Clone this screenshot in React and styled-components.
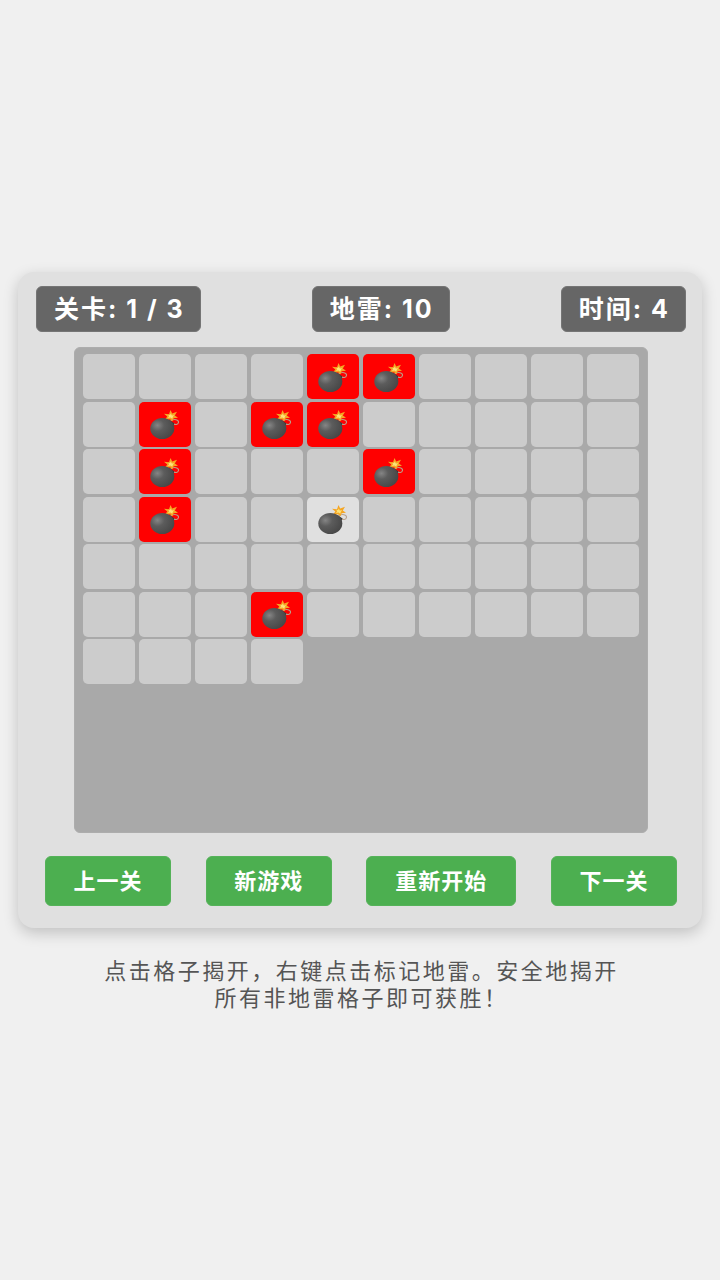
import React from 'react'
import styled, { createGlobalStyle } from 'styled-components'

const GlobalStyle = createGlobalStyle`
  html, body { margin: 0; padding: 0; height: 100%; }
  body {
    background: #f0f0f0;
    font-family: Inter, "Noto Sans CJK SC", "Noto Sans", sans-serif;
  }
`

const Page = styled.div`
  width: 720px;
  height: 1280px;
  padding-top: 272px;
  box-sizing: border-box;
  display: flex;
  flex-direction: column;
  align-items: center;
`

const Panel = styled.div`
  width: 684px;
  height: 656px;
  box-sizing: border-box;
  padding: 14px 16px 0 18px;
  background: #e0e0e0;
  border-radius: 16px;
  box-shadow: 0 5px 15px rgba(0, 0, 0, 0.2);
  display: flex;
  flex-direction: column;
  align-items: center;
`

const StatusBar = styled.div`
  width: 100%;
  display: flex;
  justify-content: space-between;
`

const Stat = styled.div`
  height: 46px;
  padding: 0 15px 4px 17px;
  box-sizing: border-box;
  display: flex;
  align-items: center;
  background: #666666;
  border: 1px solid #757575;
  color: #ffffff;
  border-radius: 6px;
  font-size: 25px;
  font-weight: 700;
  letter-spacing: 2px;
  white-space: nowrap;
`

const Board = styled.div`
  width: 574px;
  height: 486px;
  margin-top: 15px;
  box-sizing: border-box;
  padding: 6px 8px 0 7.5px;
  background: #a9a9a9;
  border: 1px solid #adadad;
  border-radius: 6px;
  display: grid;
  grid-template-columns: repeat(10, 52px);
  grid-auto-rows: 45px;
  column-gap: 4px;
  row-gap: 2.5px;
  align-content: start;
`

const CELL_BG = { hidden: '#cccccc', mine: '#ff0000', open: '#e0e0e0' }

const Cell = styled.div`
  background: ${props => CELL_BG[props.$kind]};
  border-radius: 5px;
  display: flex;
  align-items: center;
  justify-content: center;
`

const Actions = styled.div`
  width: 632px;
  margin-top: 23px;
  display: flex;
  justify-content: space-between;
`

const ActionButton = styled.button`
  height: 50px;
  width: ${props => props.$wide ? '150px' : '126px'};
  padding: 0 0 5px;
  border: 1px solid #55b259;
  border-radius: 6px;
  background: #4caf50;
  color: #ffffff;
  font-family: inherit;
  font-size: 22px;
  font-weight: 700;
  letter-spacing: 1px;
`

const Hint = styled.p`
  width: 530px;
  margin: 30px 0 0;
  padding-left: 3px;
  color: #555555;
  font-size: 22px;
  line-height: 27px;
  letter-spacing: 2.5px;
  text-align: center;
`

const Bomb = () => (
  <svg width="30" height="32" viewBox="0 0 30 32">
    <defs>
      <radialGradient id="ball" cx="0.3" cy="0.35" r="0.8">
        <stop offset="0" stopColor="#858585" />
        <stop offset="0.35" stopColor="#5c5c5c" />
        <stop offset="1" stopColor="#444444" />
      </radialGradient>
    </defs>
    <path d="M20.5 13 C24 10.5 29 11.5 28.5 14.5 C28 17 25 17 23.5 15.5" fill="none" stroke="#b8a28c" strokeWidth="1.1" />
    <path d="M20.5 2 L22.2 5.5 L27 3.8 L24.8 7.5 L28 9.7 L23.7 10.2 L22.5 13.2 L20 11.2 L14.5 12.2 L17.3 8.5 L14 5.8 L19 6.3 Z" fill="#f5a623" />
    <path d="M20.7 5.5 L21.9 7.4 L24.2 7.2 L22.9 8.8 L22.3 10.8 L20.4 9.5 L18 10 L19.3 8 L17.8 6.7 L20 7 Z" fill="#fde37a" />
    <path d="M19.5 12 L24.5 15.5 L22 20 L17 16 Z" fill="#3a3a3a" />
    <ellipse cx="12.3" cy="20.5" rx="12" ry="10.5" fill="url(#ball)" />
  </svg>
)

const mines = {
  4: 'mine', 5: 'mine',
  11: 'mine', 13: 'mine', 14: 'mine',
  21: 'mine', 25: 'mine',
  31: 'mine', 34: 'open',
  53: 'mine',
}

const cells = Array.from({ length: 64 }, (_, i) => mines[i] || 'hidden')

const App = () => (
  <>
    <GlobalStyle />
    <Page>
      <Panel>
        <StatusBar>
          <Stat>关卡: 1 / 3</Stat>
          <Stat>地雷: 10</Stat>
          <Stat>时间: 4</Stat>
        </StatusBar>
        <Board>
          {cells.map((kind, i) => (
            <Cell key={i} $kind={kind}>{kind !== 'hidden' && <Bomb />}</Cell>
          ))}
        </Board>
        <Actions>
          <ActionButton>上一关</ActionButton>
          <ActionButton>新游戏</ActionButton>
          <ActionButton $wide>重新开始</ActionButton>
          <ActionButton>下一关</ActionButton>
        </Actions>
      </Panel>
      <Hint>点击格子揭开，右键点击标记地雷。安全地揭开所有非地雷格子即可获胜！</Hint>
    </Page>
  </>
)

export default App
